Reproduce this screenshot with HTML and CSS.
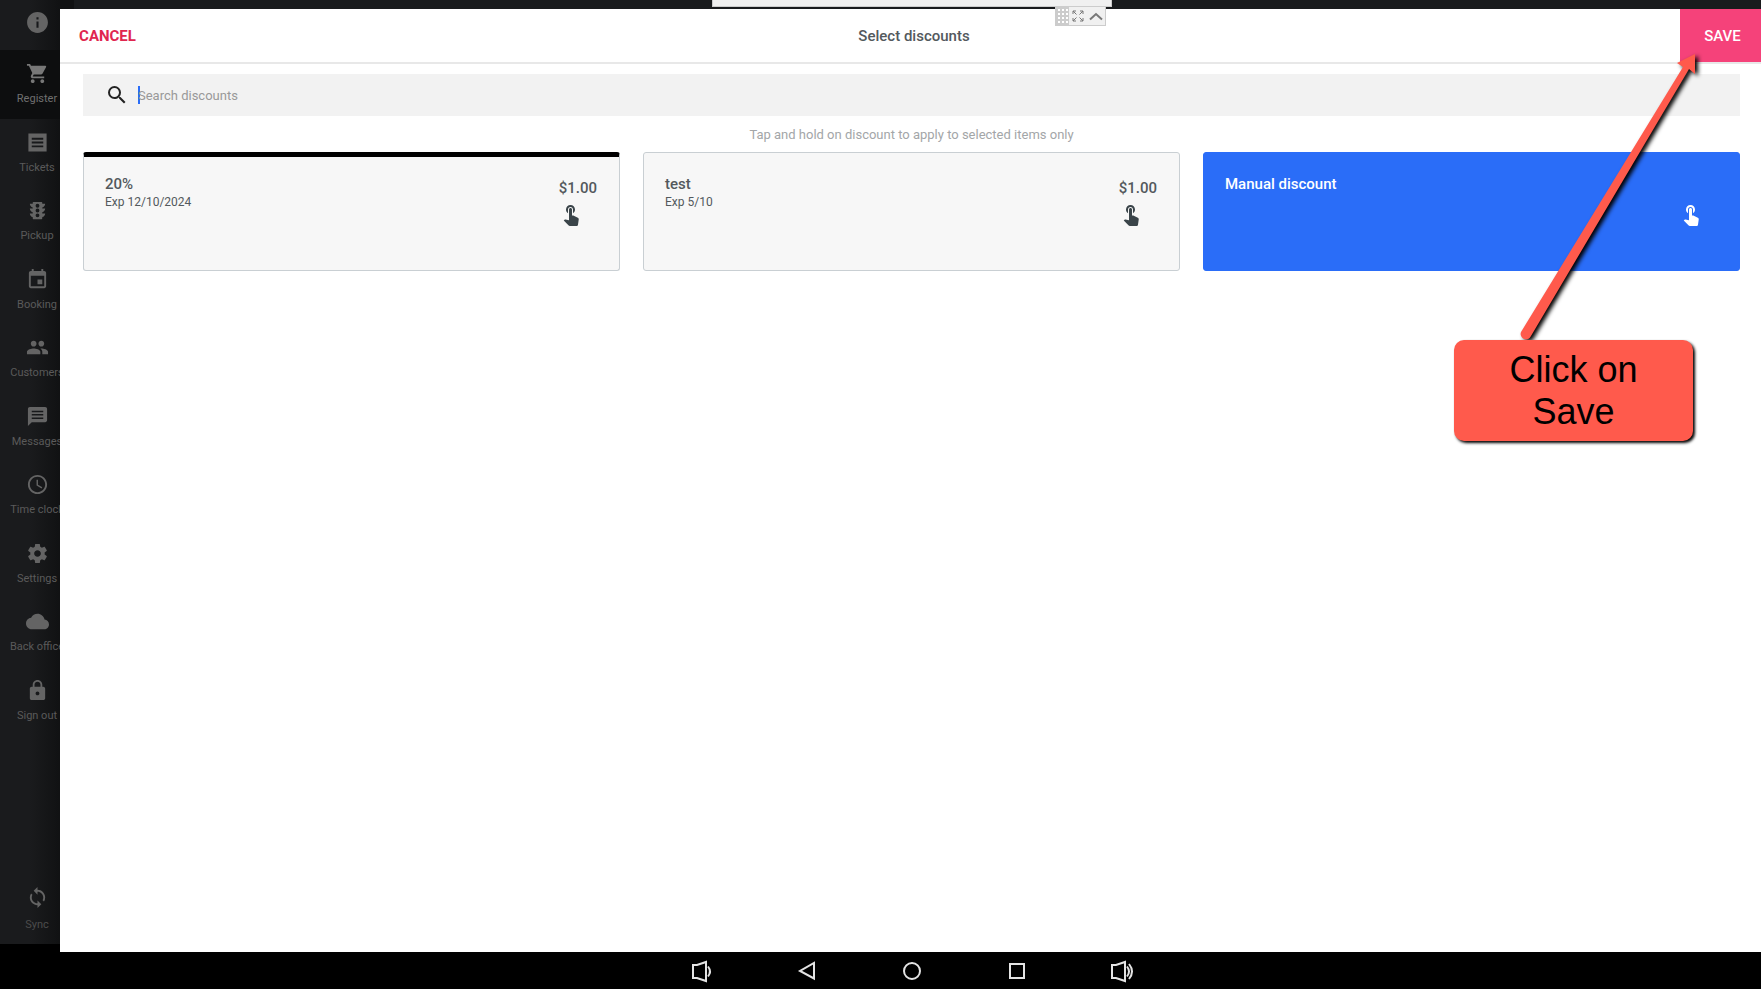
FILE: index.html
```html
<!DOCTYPE html>
<html lang="en">
<head>
<title>Select discounts</title>
<meta charset="utf-8">
<meta name="viewport" content="width=device-width,initial-scale=1">
<link rel="stylesheet" href="styles.css">
</head>
<body>
<svg class="defs" aria-hidden="true">
<symbol id="touch" viewBox="0 0 24 24"><path d="M9 11.24V7.5C9 6.12 10.12 5 11.5 5S14 6.12 14 7.5v3.74c1.21-.81 2-2.18 2-3.74C16 5.01 13.99 3 11.5 3S7 5.01 7 7.5c0 1.56.79 2.93 2 3.74zm9.84 4.63l-4.54-2.26c-.17-.07-.35-.11-.54-.11H13v-6c0-.83-.67-1.5-1.5-1.5S10 6.67 10 7.5v10.74l-3.43-.72c-.08-.01-.15-.03-.24-.03-.31 0-.59.13-.79.33l-.79.8 4.94 4.94c.27.27.65.44 1.06.44h6.79c.75 0 1.33-.55 1.44-1.28l.75-5.27c.01-.07.02-.14.02-.2 0-.62-.38-1.16-.91-1.38z"/></symbol>
</svg>
<div class="app">
<nav class="sidebar">
<a class="info" href="#" aria-label="Info"><svg viewBox="0 0 24 24"><path d="M12 2C6.48 2 2 6.48 2 12s4.48 10 10 10 10-4.48 10-10S17.52 2 12 2zm1 15h-2v-6h2v6zm0-8h-2V7h2v2z"/></svg></a>
<div class="menu">
<a class="active" href="#"><svg viewBox="0 0 24 24"><path d="M7 18c-1.1 0-1.99.9-1.99 2S5.9 22 7 22s2-.9 2-2-.9-2-2-2zM1 2v2h2l3.6 7.59-1.35 2.45c-.16.28-.25.61-.25.96 0 1.1.9 2 2 2h12v-2H7.42c-.14 0-.25-.11-.25-.25l.03-.12.9-1.63h7.45c.75 0 1.41-.41 1.75-1.03l3.58-6.49A1 1 0 0 0 20 4H5.21l-.94-2H1zm16 16c-1.1 0-1.99.9-1.99 2s.89 2 1.99 2 2-.9 2-2-.9-2-2-2z"/></svg>Register</a>
<a href="#"><svg viewBox="0 0 24 24"><path fill-rule="evenodd" d="M2.500 2.500h19v19h-19zM6 7v2h12V7zM6 11v2h12v-2zM6 15v2h12v-2z"/></svg>Tickets</a>
<a href="#"><svg viewBox="0 0 24 24"><path d="M20 10h-3V8.860c1.720-.450 3-2 3-3.860h-3V4c0-.550-.450-1-1-1H8c-.550 0-1 .450-1 1v1H4c0 1.860 1.280 3.410 3 3.860V10H4c0 1.860 1.280 3.410 3 3.860V15H4c0 1.860 1.280 3.410 3 3.860V20c0 .550.450 1 1 1h8c.550 0 1-.450 1-1v-1.140c1.720-.450 3-2 3-3.860h-3v-1.140c1.720-.450 3-2 3-3.860zm-8 9a2 2 0 1 1 0-4 2 2 0 0 1 0 4zm0-5a2 2 0 1 1 0-4 2 2 0 0 1 0 4zm0-5a2 2 0 1 1 0-4 2 2 0 0 1 0 4z"/></svg>Pickup</a>
<a href="#"><svg viewBox="0 0 24 24"><path d="M17 12h-5v5h5v-5zM16 1v2H8V1H6v2H5c-1.110 0-1.990.9-1.990 2L3 19c0 1.100.89 2 2 2h14c1.100 0 2-.9 2-2V5c0-1.100-.9-2-2-2h-1V1h-2zm3 18H5V8h14v11z"/></svg>Booking</a>
<a href="#"><svg viewBox="0 0 24 24"><path d="M16 11c1.660 0 2.990-1.340 2.990-3S17.660 5 16 5s-3 1.340-3 3 1.340 3 3 3zm-8 0c1.660 0 2.990-1.340 2.990-3S9.660 5 8 5 5 6.340 5 8s1.340 3 3 3zm0 2c-2.330 0-7 1.170-7 3.500V19h14v-2.500c0-2.330-4.670-3.500-7-3.500zm8 0c-.29 0-.62.020-.97.050 1.160.84 1.970 1.970 1.970 3.450V19h6v-2.500c0-2.330-4.670-3.500-7-3.500z"/></svg>Customers</a>
<a href="#"><svg viewBox="0 0 24 24"><path d="M20 2H4c-1.100 0-1.990.9-1.990 2L2 22l4-4h14c1.100 0 2-.9 2-2V4c0-1.100-.9-2-2-2zM6 6h12v1.500H6zm0 3.500h12V11H6zM6 13h12v1.500H6z"/></svg>Messages</a>
<a href="#"><svg viewBox="0 0 24 24"><path d="M11.990 2C6.470 2 2 6.480 2 12s4.470 10 9.990 10C17.520 22 22 17.520 22 12S17.520 2 11.990 2zM12 20c-4.420 0-8-3.580-8-8s3.580-8 8-8 8 3.580 8 8-3.580 8-8 8zm.5-13H11v6l5.250 3.150.75-1.230-4.500-2.670z"/></svg>Time clock</a>
<a href="#"><svg viewBox="0 0 24 24"><path d="M19.430 12.980c.040-.320.070-.640.070-.980s-.030-.660-.070-.980l2.110-1.650c.190-.150.240-.420.120-.640l-2-3.460c-.120-.220-.390-.300-.610-.220l-2.490 1c-.520-.400-1.080-.730-1.690-.980l-.380-2.650A.488.488 0 0 0 14 2h-4c-.250 0-.460.180-.490.420l-.380 2.650c-.610.250-1.170.590-1.690.980l-2.490-1c-.230-.090-.490 0-.610.220l-2 3.460c-.130.220-.070.490.120.640l2.110 1.650c-.040.320-.070.650-.070.980s.030.660.070.980l-2.110 1.650c-.190.150-.240.420-.120.640l2 3.460c.120.220.390.300.610.220l2.490-1c.520.400 1.080.730 1.690.980l.380 2.650c.030.240.240.420.490.420h4c.250 0 .460-.180.490-.420l.380-2.650c.610-.250 1.170-.590 1.690-.980l2.490 1c.230.090.490 0 .610-.220l2-3.460c.120-.220.070-.490-.120-.640l-2.110-1.650zM12 15.500c-1.930 0-3.500-1.570-3.500-3.500s1.570-3.500 3.500-3.500 3.500 1.570 3.500 3.500-1.570 3.500-3.500 3.500z"/></svg>Settings</a>
<a href="#"><svg viewBox="0 0 24 24"><path d="M19.350 10.040C18.670 6.590 15.640 4 12 4 9.110 4 6.600 5.640 5.350 8.040 2.340 8.360 0 10.910 0 14c0 3.310 2.690 6 6 6h13c2.760 0 5-2.240 5-5 0-2.640-2.050-4.780-4.650-4.960z"/></svg>Back office</a>
<a href="#"><svg viewBox="0 0 24 24"><path d="M18 8h-1V6c0-2.760-2.240-5-5-5S7 3.240 7 6v2H6c-1.100 0-2 .9-2 2v10c0 1.100.9 2 2 2h12c1.100 0 2-.9 2-2V10c0-1.100-.9-2-2-2zm-6 9c-1.100 0-2-.9-2-2s.9-2 2-2 2 .9 2 2-.9 2-2 2zm3.100-9H8.900V6c0-1.710 1.390-3.100 3.100-3.100s3.100 1.390 3.100 3.100v2z"/></svg>Sign out</a>
</div>
<a class="sync" href="#"><svg viewBox="0 0 24 24"><path d="M12 4V1L8 5l4 4V6c3.310 0 6 2.690 6 6 0 1.010-.25 1.970-.7 2.800l1.460 1.460A7.930 7.930 0 0 0 20 12c0-4.420-3.580-8-8-8zm0 14c-3.310 0-6-2.690-6-6 0-1.010.25-1.970.7-2.800L5.240 7.740A7.930 7.930 0 0 0 4 12c0 4.420 3.580 8 8 8v3l4-4-4-4v3z"/></svg>Sync</a>
</nav>
<main class="dialog">
<header>
<button class="cancel" type="button">CANCEL</button>
<h1>Select discounts</h1>
<button class="save" type="button">SAVE</button>
</header>
<div class="content">
<div class="search">
<label for="search" aria-label="Search discounts"><svg viewBox="0 0 24 24"><path d="M15.500 14h-.79l-.28-.27A6.471 6.471 0 0 0 16 9.500 6.500 6.500 0 1 0 9.500 16c1.610 0 3.090-.59 4.230-1.570l.27.28v.79l5 4.990L20.490 19l-4.990-5zm-6 0C7.010 14 5 11.990 5 9.500S7.010 5 9.500 5 14 7.010 14 9.500 11.990 14 9.500 14z"/></svg></label>
<span class="caret"></span>
<input type="text" id="search" placeholder="Search discounts">
</div>
<p class="hint">Tap and hold on discount to apply to selected items only</p>
<div class="cards">
<button class="card selected" type="button">
<span class="name">20%<small>Exp 12/10/2024</small></span>
<span class="price">$1.00<svg><use href="#touch"/></svg></span>
</button>
<button class="card" type="button">
<span class="name">test<small>Exp 5/10</small></span>
<span class="price">$1.00<svg><use href="#touch"/></svg></span>
</button>
<button class="card manual" type="button">
<span class="name">Manual discount</span>
<span class="price"><svg><use href="#touch"/></svg></span>
</button>
</div>
</div>
</main>
</div>
<nav class="navbar">
<button type="button" aria-label="Volume down"><svg viewBox="0 0 24 24"><path d="M3 6h4l9-3v19l-9-3H3zM18 7.500q4 5 0 10"/></svg></button>
<button type="button" aria-label="Back"><svg viewBox="0 0 24 24"><path d="M19 4v15.500L5 12z"/></svg></button>
<button type="button" aria-label="Home"><svg viewBox="0 0 24 24"><circle cx="12" cy="12" r="8"/></svg></button>
<button type="button" aria-label="Recent"><svg viewBox="0 0 24 24"><path d="M5 5h14v14H5z"/></svg></button>
<button type="button" aria-label="Volume up"><svg viewBox="0 0 24 24"><path d="M2 6h4l9-3v19l-9-3H2zM17 7.500q4 5 0 10M19 5q6 7.500 0 15"/></svg></button>
</nav>
<div class="viewbar"></div>
<div class="viewtools">
<button class="grip" type="button" aria-label="Move"></button>
<button type="button" aria-label="Full screen"><svg viewBox="0 0 12 12"><path d="M1 4V1h3M1 1l3.500 3.500M8 1h3v3M11 1L7.500 4.500M1 8v3h3M1 11l3.500-3.500M11 8v3H8M11 11L7.500 7.500"/></svg></button>
<button class="up" type="button" aria-label="Collapse"><svg viewBox="0 0 16 12"><path d="M2 9.500L8 4l6 5.500"/></svg></button>
</div>
<div class="callout">
<svg viewBox="0 0 240 286"><path d="M67 278L229 13l-6-4 18-9v20l-6-5L77 282a5 5 0 0 1-10-4z"/></svg>
<p>Click on Save</p>
</div>
</body>
</html>
```
FILE: styles.css
```css
*{box-sizing: border-box;}
body{margin: 0;min-height: 100vh;display: flex;flex-direction: column;position: relative;overflow: hidden;background: #000;font-family: Roboto, sans-serif;color: #53595d;}
button{margin: 0;padding: 0;border: none;background: none;font: inherit;color: inherit;}
a{color: inherit;text-decoration: none;}
h1,p{margin: 0;}
svg{display: block;fill: currentColor;}
.defs{position: absolute;width: 0;height: 0;}

.app{flex: 1;display: flex;flex-direction: column;position: relative;padding-bottom: 8px;background: linear-gradient(#191b1d, #191b1d) top/100% 20px no-repeat #000;}

/* side menu, partly covered by the dialog */
.sidebar{flex: 1;width: 74px;display: flex;flex-direction: column;background: linear-gradient(90deg, #1a1b1d 40%, #111213 80%);color: #5a5a5a;font-size: 11px;line-height: 16px;}
.sidebar svg{width: 23px;height: 23px;color: #646464;}
.sidebar a{display: flex;flex-direction: column;align-items: center;gap: 6px;white-space: nowrap;}
.info{height: 50px;padding-top: 10px;}
.sidebar .info svg{width: 25px;height: 25px;}
.menu{display: grid;grid-auto-rows: 1fr;height: 685px;}
.menu a{padding-top: 12px;}
.menu .active{background: #0d0e0f;color: #707070;}
.menu .active svg{color: #777;}
.sync{margin-top: auto;padding-bottom: 11px;}
.sidebar .sync{gap: 8px;color: #4c4c4c;}

.dialog{position: absolute;top: 9px;right: 0;bottom: 0;left: 60px;background: #fff;}
header{display: grid;grid-template-columns: 88px 1fr 81px;align-items: center;height: 55px;border-bottom: 2px solid #e8e8e8;font-size: 15px;}
h1{font-size: 15px;font-weight: 500;text-align: center;}
.cancel{padding-left: 7px;color: #e0264f;font-weight: 700;}
.save{height: 53px;padding-left: 4px;background: #f5427a;color: #fff;font-weight: 500;}
.content{padding: 10px 21px 0 23px;}
.search{display: flex;align-items: center;height: 42px;padding-left: 22px;background: #f2f2f2;}
.search svg{width: 24px;height: 24px;color: #222;}
.caret{width: 2px;height: 18px;margin: 0 -2px 0 9px;background: #2a6df8;}
.search input{flex: 1;margin: 0;padding: 0;border: none;outline: none;background: none;font: 13px Roboto, sans-serif;color: #333;}
.search input::placeholder{color: #999;opacity: 1;}
.hint{padding: 9px 0 8px;font-size: 13px;line-height: 19px;color: #a3a6a8;text-align: center;}
.cards{display: grid;grid-template-columns: repeat(3, 1fr);gap: 23px;}
.card{display: flex;justify-content: space-between;align-items: flex-start;height: 119px;padding: 21px 22px 0 21px;border: 1px solid #c9cfd3;border-radius: 3px;background: #f7f7f7;font-size: 15px;font-weight: 500;line-height: 20px;text-align: left;}
.card.selected{padding-top: 17px;border-top: 5px solid #000;}
.card.manual{border-color: #2a6df8;background: #2a6df8;color: #fff;}
.name{display: flex;flex-direction: column;}
.card small{font-size: 12px;font-weight: 400;line-height: 16px;}
.price{display: flex;flex-direction: column;align-items: flex-end;gap: 4px;min-height: 52px;justify-content: flex-end;padding-top: 4px;}
.price svg{width: 24px;height: 24px;margin-right: 14px;}
.card:not(.manual) .price svg{color: #3a4449;}

.navbar{display: flex;justify-content: center;height: 37px;padding-left: 63px;color: #e4e4e4;}
.navbar button{display: flex;align-items: center;justify-content: center;width: 105px;}
.navbar svg{width: 24px;height: 24px;fill: none;stroke: currentColor;stroke-width: 2;}

/* remote view toolbar over the top edge */
.viewbar{position: absolute;top: 0;left: calc(50% - 169px);width: 400px;height: 7px;border: 1px solid #ccc;border-top: none;background: #f0f0f0;}
.viewtools{position: absolute;top: 6px;left: calc(50% + 174px);display: flex;width: 51px;height: 20px;border: 1px solid #ccc;background: #f0f0f0;color: #777;}
.viewtools button{flex: 1;display: flex;align-items: center;justify-content: center;}
.viewtools svg{width: 12px;height: 12px;fill: none;stroke: currentColor;}
.viewtools .up svg{width: 16px;stroke-width: 2;}
.viewtools .grip{flex: 0 0 13px;background: conic-gradient(#ccc 25%, #fff 0 50%, #ccc 0) 0 0/4px 4px;}

.callout{position: absolute;top: 54px;right: 68px;width: 239px;color: #ff5a4c;}
.callout svg{width: 240px;height: 286px;overflow: visible;filter: drop-shadow(3px 2px 2px #000);}
.callout p{position: relative;padding: 9px 40px 8px;border-radius: 10px;background: #ff5a4c;box-shadow: 2px 2px 3px #000;color: #000;font: 36px/42px "Liberation Sans", sans-serif;text-align: center;}
```
